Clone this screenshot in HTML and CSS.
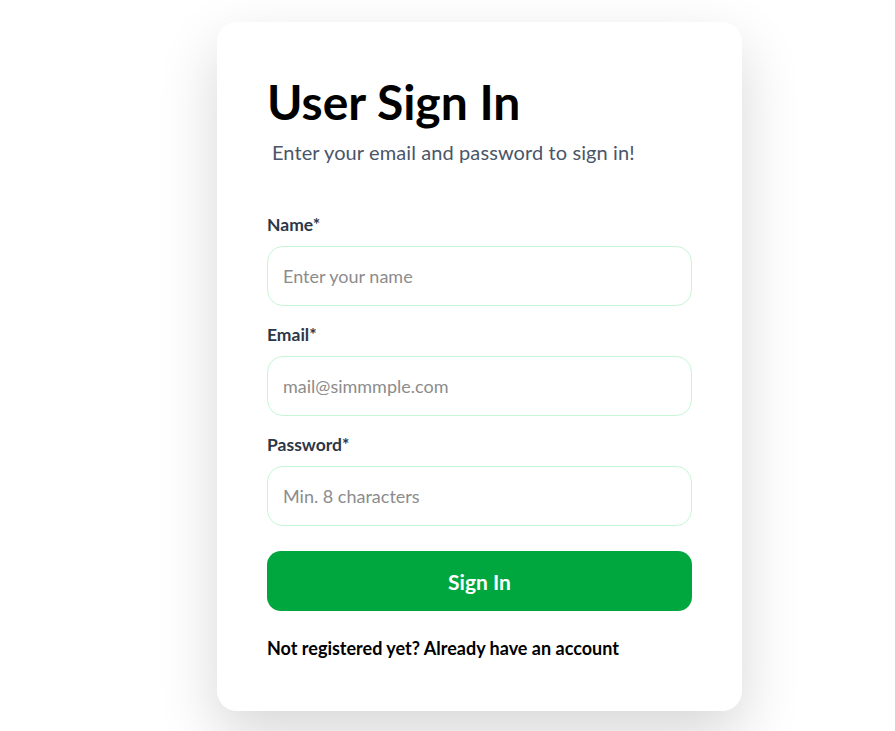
FILE: index.html
```html
<!DOCTYPE html>
<html lang="en">
<head>
<meta charset="utf-8">
<title>User Sign In</title>
<link rel="stylesheet" href="styles.css">
</head>
<body>
<div class="page">
  <div class="card">
    <h1 class="title">User Sign In</h1>
    <p class="subtitle">Enter your email and password to sign in!</p>
    <form class="form">
      <div class="field">
        <label class="label" for="name">Name*</label>
        <input class="input" id="name" type="text" placeholder="Enter your name">
      </div>
      <div class="field">
        <label class="label" for="email">Email*</label>
        <input class="input" id="email" type="email" placeholder="mail@simmmple.com">
      </div>
      <div class="field">
        <label class="label" for="password">Password*</label>
        <input class="input" id="password" type="password" placeholder="Min. 8 characters">
      </div>
      <button class="button" type="button">Sign In</button>
    </form>
    <p class="footer">Not registered yet? Already have an account</p>
  </div>
</div>
</body>
</html>
```
FILE: styles.css
```css
html, body {
  margin: 0;
  background: #ffffff;
  font-family: "Lato", "Noto Sans", sans-serif;
}
.page {
  padding: 22px 0 20px 217px;
}
.card {
  width: 525px;
  height: 689px;
  box-sizing: border-box;
  padding: 56px 50px 0;
  background: #ffffff;
  border-radius: 20px;
  box-shadow: 0 24px 60px rgba(0, 0, 0, 0.16);
}
.title {
  margin: 0;
  font-size: 48px;
  line-height: 1;
  font-weight: 700;
  color: #000;
}
.subtitle {
  margin: 14px 0 0 5px;
  font-size: 20px;
  line-height: 24px;
  letter-spacing: 0.1px;
  color: #4a5568;
}
.form {
  margin-top: 49px;
  display: flex;
  flex-direction: column;
}
.field {
  display: flex;
  flex-direction: column;
  margin-bottom: 17px;
}
.label {
  font-size: 17.5px;
  font-weight: 700;
  line-height: 24px;
  color: #2d3748;
  margin-bottom: 9px;
}
.input {
  height: 60px;
  box-sizing: border-box;
  border: 1px solid #c6f6d5;
  border-radius: 16px;
  padding: 0 15px;
  font-family: inherit;
  font-size: 18px;
  color: #2d3748;
  outline: none;
}
.input::placeholder {
  color: #8c8c8c;
}
.button {
  margin-top: 8px;
  height: 60px;
  border: none;
  border-radius: 14px;
  background: #00a73f;
  color: #fff;
  font-family: inherit;
  font-size: 21px;
  font-weight: 700;
}
.footer {
  margin: 25px 0 0;
  font-size: 18px;
  font-weight: 700;
  line-height: 24px;
  color: #000;
}
```
